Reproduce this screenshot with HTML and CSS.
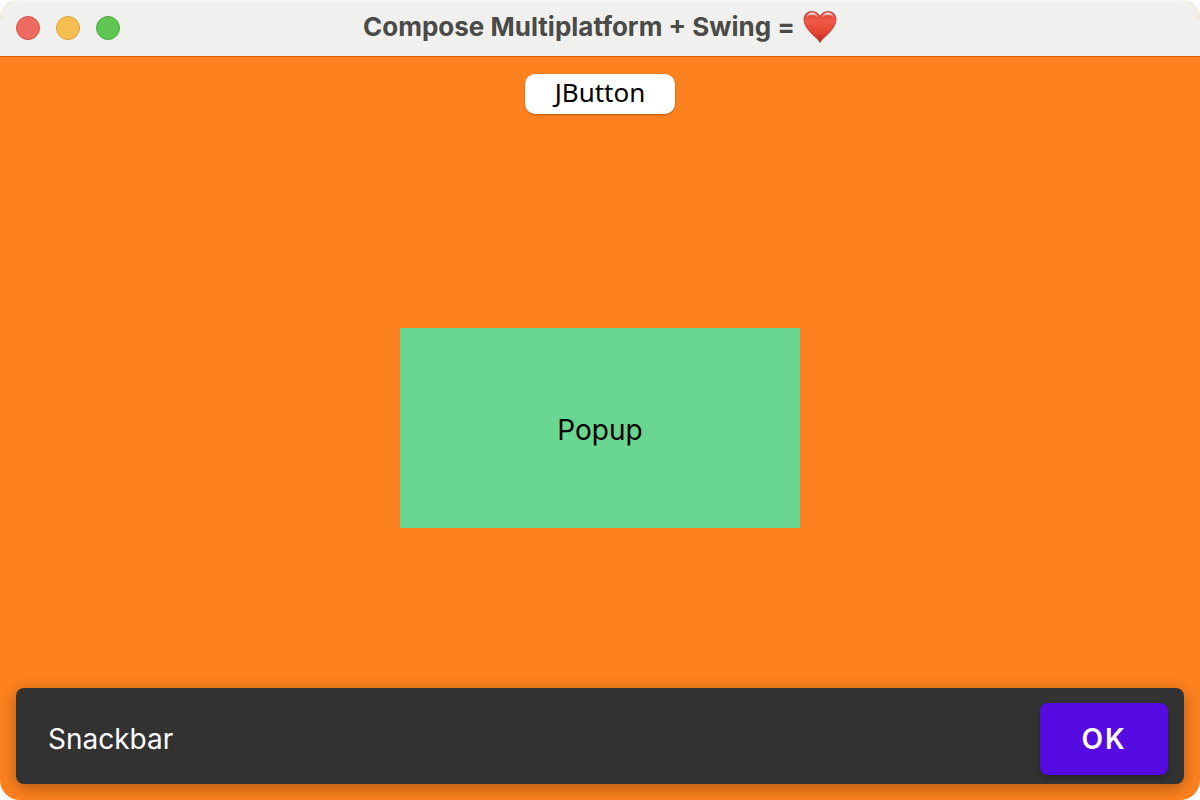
FILE: index.html
```html
<!DOCTYPE html>
<html lang="en">
<head>
<meta charset="utf-8">
<meta name="viewport" content="width=device-width, initial-scale=1">
<title>Compose Multiplatform + Swing = ❤️</title>
<link rel="stylesheet" href="styles.css">
</head>
<body>
<div class="window">
  <header class="titlebar">
    <div class="controls">
      <button class="control close" type="button" aria-label="Close"></button>
      <button class="control minimize" type="button" aria-label="Minimize"></button>
      <button class="control maximize" type="button" aria-label="Maximize"></button>
    </div>
    <h1 class="title">
      <span>Compose Multiplatform + Swing =</span>
      <svg class="heart" viewBox="0 0 34 34" role="img" aria-label="heart">
        <defs>
          <linearGradient id="body" x1="0" y1="0" x2="0" y2="1">
            <stop offset="0" stop-color="#dc3c30"/>
            <stop offset="0.3" stop-color="#ee5a48"/>
            <stop offset="0.7" stop-color="#e5402f"/>
            <stop offset="1" stop-color="#b5231a"/>
          </linearGradient>
          <linearGradient id="shine" x1="0" y1="0" x2="0" y2="1">
            <stop offset="0" stop-color="#fff" stop-opacity="0.9"/>
            <stop offset="1" stop-color="#fff" stop-opacity="0"/>
          </linearGradient>
        </defs>
        <path d="M17 32.500C15.500 29 10.500 26 6.500 21.300C3 17.200 1 13.300 1 9.500C1 5 4.300 1.500 8.700 1.500C12.400 1.500 15.600 3.400 17 6.500C18.400 3.400 21.600 1.500 25.300 1.500C29.700 1.500 33 5 33 9.500C33 13.300 31 17.200 27.500 21.300C23.500 26 18.500 29 17 32.500Z" fill="url(#body)" stroke="#b9342b" stroke-width="0.8"/>
        <path d="M2.800 8.500C3.200 4.700 5.800 2.500 9 2.500C12.200 2.500 14.600 4.500 15.700 8C13.800 5.800 11.500 4.900 9 4.900C6.300 4.900 4.300 6 2.800 8.500Z" fill="url(#shine)"/>
        <path d="M31.200 8.500C30.800 4.700 28.200 2.500 25 2.500C21.800 2.500 19.400 4.500 18.300 8C20.200 5.800 22.500 4.900 25 4.900C27.700 4.900 29.700 6 31.200 8.500Z" fill="url(#shine)"/>
      </svg>
    </h1>
  </header>
  <main class="content">
    <button class="jbutton" type="button">JButton</button>
    <div class="popup">Popup</div>
    <div class="snackbar" role="status">
      <span>Snackbar</span>
      <button class="ok" type="button">OK</button>
    </div>
  </main>
</div>
</body>
</html>
```
FILE: styles.css
```css
* {
  box-sizing: border-box;
}

body {
  margin: 0;
  background: #fff;
  font-family: Inter, "Liberation Sans", sans-serif;
  font-optical-sizing: none;
}

button {
  border: 0;
  padding: 0;
  font: inherit;
}

.window {
  display: flex;
  flex-direction: column;
  min-height: 100vh;
  border-radius: 20px;
  overflow: hidden;
  background: #fd811e;
}

.titlebar {
  display: grid;
  grid-template-columns: 1fr auto 1fr;
  align-items: center;
  min-height: 56px;
  padding: 0 16px;
  background: #f0f0ee;
  box-shadow: inset 0 2px 1px #f8f8f7;
}

.controls {
  display: flex;
  gap: 16px;
}

.control {
  width: 24px;
  height: 24px;
  border-radius: 50%;
  border: 1px solid;
}

.close {
  background: #ed6b60;
  border-color: #d65349;
}

.minimize {
  background: #f5bf4f;
  border-color: #d9a03d;
}

.maximize {
  background: #62c655;
  border-color: #4eaa3e;
}

.title {
  display: flex;
  align-items: center;
  gap: 8px;
  margin: 0;
  padding-bottom: 2px;
  color: #4a4a48;
  font-size: 26px;
  font-weight: 700;
  line-height: 32px;
}

.heart {
  width: 34px;
  height: 34px;
}

.content {
  flex: 1;
  display: grid;
  padding: 16px;
  box-shadow: inset 0 1px #d95f0a;
}

.content > * {
  grid-area: 1 / 1;
}

.jbutton {
  place-self: start center;
  width: 150px;
  height: 40px;
  margin-top: 2px;
  padding-bottom: 4px;
  border-radius: 10px;
  background: #fff;
  color: #000;
  font-family: "Noto Sans", sans-serif;
  font-size: 26px;
  line-height: 36px;
  box-shadow: 0 1px 2px rgba(0, 0, 0, 0.3);
}

.popup {
  place-self: center;
  display: grid;
  place-items: center;
  width: 400px;
  height: 200px;
  padding-top: 4px;
  background: #69d692;
  color: #000;
  font-size: 28px;
}

.snackbar {
  align-self: end;
  display: flex;
  align-items: center;
  justify-content: space-between;
  min-height: 96px;
  padding: 15px 16px 9px 32px;
  border-radius: 8px;
  background: #323232;
  color: #fff;
  font-size: 28px;
  box-shadow: 0 4px 16px rgba(0, 0, 0, 0.3);
}

.ok {
  width: 128px;
  height: 72px;
  border-radius: 8px;
  background: #570be3;
  color: #fff;
  font-weight: 600;
  letter-spacing: 2px;
  box-shadow: 0 2px 5px rgba(0, 0, 0, 0.3);
}
```
